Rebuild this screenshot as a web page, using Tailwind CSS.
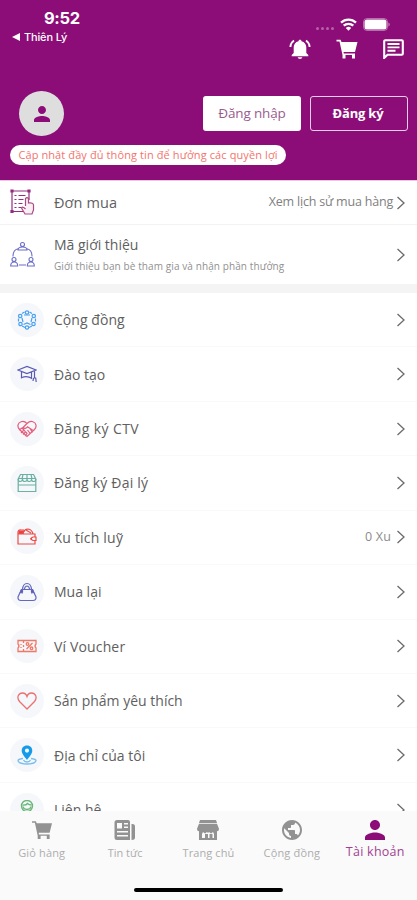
<!DOCTYPE html>
<html lang="vi">
<head>
<meta charset="utf-8">
<title>Tài khoản</title>
<script src="https://cdn.jsdelivr.net/npm/@tailwindcss/browser@4"></script>
</head>
<body class="bg-white">
<svg class="hidden">
  <symbol id="chev" viewBox="0 0 10 14"><path d="M1.500 1 8 7l-6.500 6" fill="none" stroke="#6b6b6b" stroke-width="1.300"/></symbol>
  <symbol id="cart" viewBox="0 0 21 20"><path d="M0 .8h4l1 2.200h16L18.500 13H7l.3 1.600H18.500V16H6L3 2.500H0zM6 16h3v3.500H6zM15.500 16h3v3.500h-3z"/></symbol>
  <symbol id="person" viewBox="4 4 16 16"><path d="M12 12c2.210 0 4-1.790 4-4s-1.790-4-4-4-4 1.790-4 4 1.790 4 4 4zm0 2c-2.670 0-8 1.340-8 4v2h16v-2c0-2.660-5.330-4-8-4z"/></symbol>
</svg>
<div class="w-[417px] h-[900px] flex flex-col overflow-hidden bg-white font-['Open_Sans','Noto_Sans',sans-serif] text-[#606060]">
  <header class="h-[180px] shrink-0 bg-[#8c0d77] text-white">
    <div class="h-[72px] flex justify-between">
      <div class="pl-3 pt-[7px] font-['Inter',sans-serif]">
        <div class="pl-8 text-[16.500px] leading-[22px] font-bold tracking-[-0.35px]">9:52</div>
        <div class="flex items-center gap-[4px] pt-[1px] text-[11px] leading-[14px] font-medium tracking-[-0.15px]"><svg class="w-2 h-2" viewBox="0 0 8 8"><path d="M0 4 8 0v8z" fill="#fff"/></svg><span>Thiên Lý</span></div>
      </div>
      <div class="w-[132px] pr-3 pt-[17px]">
        <div class="flex h-[14px] items-center pl-[31px]">
          <span class="flex gap-[2px] pt-[9px]"><i class="size-[3px] rounded-full bg-white/35"></i><i class="size-[3px] rounded-full bg-white/35"></i><i class="size-[3px] rounded-full bg-white/35"></i><i class="size-[3px] rounded-full bg-white/35"></i></span>
          <svg class="ml-[6px] w-[17px] h-[13px]" viewBox="0 0 17 13" fill="none" stroke="#fff" stroke-width="2.300"><path d="M1 4.700a10.800 10.800 0 0 1 15 0M3.700 7.700a7 7 0 0 1 9.600 0"/><path d="M5.800 10a4 4 0 0 1 5.400 0l-2.700 2.800z" fill="#fff" stroke="none"/></svg>
          <svg class="ml-[6px] w-[27px] h-[13px]" viewBox="0 0 27 13"><rect x=".5" y=".5" width="24" height="12" rx="3.500" fill="none" stroke="#fff" stroke-opacity=".4"/><rect x="1.500" y="1.500" width="22" height="10" rx="2.500" fill="#fff"/><path d="M25.500 4.500c1.500.7 1.500 3.300 0 4z" fill="#fff" fill-opacity=".6"/></svg>
        </div>
        <div class="flex h-[22px] items-center mt-[7px] pl-[4px]">
          <svg class="w-[22px] h-[21px]" viewBox="0 0 22 21" fill="#fff"><path d="M11 .8c1 0 1.500.6 1.500 1.500 3 .8 4.800 3 4.800 6V14l2 2v1.200H2.700V16l2-2V8.300c0-3 1.800-5.200 4.800-6C9.500 1.400 10 .8 11 .8zM8.700 18.300h4.600c-.3 2.200-4.300 2.200-4.600 0z"/><path d="M5 1.500C2.800 3 1.500 5 1.400 8M17 1.500c2.200 1.500 3.500 3.500 3.600 6.500" fill="none" stroke="#fff" stroke-width="1.900"/></svg>
          <svg class="ml-[25px] w-[22px] h-[20px] fill-white"><use href="#cart"/></svg>
          <svg class="ml-[25px] w-[21px] h-[20px]" viewBox="0 0 21 20"><path d="M1.200 19V2.200Q1.200 1.200 2.200 1.200h16.600q1 0 1 1v12.600q0 1-1 1H4.500z" fill="none" stroke="#fff" stroke-width="2.100"/><path d="M4.500 5h12M4.500 8.400h12M4.500 11.800h8" stroke="#fff" stroke-width="1.900"/></svg>
        </div>
      </div>
    </div>
    <div class="h-[72px] flex items-center pl-[19px] pr-[9px] pt-[11px]">
      <div class="size-[45px] rounded-full bg-[#dedede] flex items-center justify-center"><svg class="size-4 fill-[#8c0d77]"><use href="#person"/></svg></div>
      <div class="ml-auto w-[98px] h-[35px] rounded-[3px] bg-white text-[#9a5b8f] text-[13.500px] tracking-[-0.15px] flex items-center justify-center">Đăng nhập</div>
      <div class="ml-[9px] w-[98px] h-[35px] rounded-[3px] border border-[#edcde8] text-[13px] font-bold tracking-[-0.2px] flex items-center justify-center pr-[2px]">Đăng ký</div>
    </div>
    <div class="ml-[10px] mt-[1px] w-[276px] h-[20px] rounded-full bg-white text-[#f4736d] text-[11px] tracking-[0.1px] whitespace-nowrap flex items-center justify-center">Cập nhật đầy đủ thông tin để hưởng các quyền lợi</div>
  </header>
  <main class="flex-1 min-h-0 overflow-hidden">
    <div class="h-[45px] border-t border-t-[#edc6e6] border-b border-b-[#f3f3f3] flex items-center pl-[10px] pr-[11px]">
      <svg class="w-[26px] h-[27px]" viewBox="0 0 26 27" fill="none" stroke="#942c80" stroke-width="1.200"><path d="M13 22.500H2V2h17v9M4.500 6.500h2M8.500 6.500h7M4.500 10.500h2M8.500 10.500h5M4.500 14.500h2M8.500 14.500h4M4.500 18.500h2M8.500 18.500h3"/><path d="M1 1h2v2H1zM18 1h2v2h-2zM1 21.500h2v2H1z" fill="#942c80"/><path d="M15.500 17V9.500q1.500-1.500 3 0V14q5-.5 5 2v5l-1.500 4h-7l-3.500-6q1-2 4 1" fill="#fbeff6" stroke="#a84a83"/></svg>
      <span class="ml-[18px] text-[14.500px] tracking-[0.1px]">Đơn mua</span>
      <span class="ml-auto mr-[3px] text-[12.500px] tracking-[-0.2px] text-[#808080]">Xem lịch sử mua hàng</span>
      <svg class="w-[10px] h-[14px]"><use href="#chev"/></svg>
    </div>
    <div class="h-[59px] flex items-center pl-[10px] pr-[11px]">
      <svg class="w-[25px] h-[27px]" viewBox="0 0 25 27" fill="none" stroke="#6a6dca" stroke-width="1.100"><circle cx="12.500" cy="3.500" r="2"/><path d="M8 9q0-3 4.500-3T17 9zM8 7.800C4.500 8.500 3 10.500 3 15.500M17 7.800c3.500.7 5 2.700 5 7.700M9 24h7"/><circle cx="4" cy="18.500" r="2"/><circle cx="21" cy="18.500" r="2"/><path d="M.7 25q0-4 3.500-4t3.500 4zM17.300 25q0-4 3.500-4t3.500 4z"/></svg>
      <div class="ml-[19px] mt-[2px]"><div class="text-[14px] leading-[22px]">Mã giới thiệu</div><div class="text-[10px] leading-[21px] tracking-[0.1px] text-[#909090] whitespace-nowrap">Giới thiệu bạn bè tham gia và nhận phần thưởng</div></div>
      <svg class="ml-auto w-[10px] h-[14px]"><use href="#chev"/></svg>
    </div>
    <div class="h-[9px] bg-[#f4f4f4]"></div>
    <div class="text-[14px] [&>div]:h-[54.430px] [&>div]:flex [&>div]:items-center [&>div]:pl-[10px] [&>div]:pr-[11px] [&>div]:border-b [&>div]:border-[#f9f9f9] [&>div>i]:size-[34px] [&>div>i]:mr-[10px] [&>div>i]:rounded-full [&>div>i]:bg-[#f5f7fa] [&>div>i]:flex [&>div>i]:items-center [&>div>i]:justify-center [&>div>i>svg]:size-5 [&>div>svg]:w-[10px] [&>div>svg]:h-[14px] [&>div>svg]:ml-auto">
      <div><i><svg viewBox="0 0 20 20" fill="none" stroke="#4ba1ef" stroke-width="1.200"><circle cx="10" cy="2.500" r="1.700"/><circle cx="3.200" cy="6" r="1.700"/><circle cx="16.800" cy="6" r="1.700"/><circle cx="3.500" cy="14" r="1.700"/><circle cx="16.500" cy="14" r="1.700"/><circle cx="10" cy="17.500" r="1.700"/><path d="M7 5h6M5 3.500 7.500 2M15 3.500 12.500 2M1.500 8.500v3M18.500 8.500v3M5 16l3 1.500M15 16l-3 1.500M5 8l1 4M15 8l-1 4M6.500 14.500 10 13l3.500 1.500"/></svg></i><span class="tracking-[0.05px]">Cộng đồng</span><svg><use href="#chev"/></svg></div>
      <div><i><svg viewBox="0 0 20 20" fill="none" stroke="#5a5ab2" stroke-width="1.200"><path d="m1 6 9-3.500L19 6l-9 3.500zM4.500 7.500v6.200q5.500-2.500 10 .6V8M17.500 7v7M16.500 14h2.200l.5 4M16.500 14l-.5 3"/></svg></i><span>Đào tạo</span><svg><use href="#chev"/></svg></div>
      <div><i><svg viewBox="0 0 20 20" fill="none" stroke="#e55c7b" stroke-width="1.200"><path d="M10 4.500Q7 1.500 4 2.800C.5 4 0 8 2.500 10.500l7.500 7 7.500-7C20 8 19.500 4 16 2.800q-3-1.300-6 1.700L6 8.500q2 2 4.500-.7l6 4M13 9.500l2.500 4M10.500 11l3 4M2 11l3-2 2 2-3 3M7 11l1.500 2L6 15.500M9 13l1 1.500L8 17"/></svg></i><span class="tracking-[0.4px]">Đăng ký CTV</span><svg><use href="#chev"/></svg></div>
      <div><i><svg viewBox="0 0 20 20" fill="none" stroke="#6bb0a4" stroke-width="1.200"><path d="M3.500 1.500h13l2.300 4.500v12.500H1.200V6zM1.500 5.500h17M1.200 12h17.600M6 1.500 5 6M10 1.500V6M14 1.500 15 6"/><path d="M1.200 6q0 2.500 2 2.500T5.500 6q0 2.500 2.300 2.500T10 6q0 2.500 2.300 2.500T14.500 6q0 2.500 2.200 2.500T18.800 6"/></svg></i><span class="tracking-[0.2px]">Đăng ký Đại lý</span><svg><use href="#chev"/></svg></div>
      <div><i><svg viewBox="0 0 20 20" fill="none" stroke="#ec4a47" stroke-width="1.200"><path d="M1 4.500V17h17v-3.500M18 10V7H1.500M1 4.500q1-2 3-1.500h3M6 7q1-5 5-5 4 .5 5 5M9 3l5 3M19 10h-3q-4 1.800 0 3.500h3zM13 11.800h2"/><path d="M2 4h5L5.500 6.500H2z" fill="#ec3f3c"/></svg></i><span class="tracking-[0.2px]">Xu tích luỹ</span><span class="ml-auto mr-[5px] text-[12.500px] tracking-[0.15px] text-[#8c8c8c]">0 Xu</span><svg class="!ml-0"><use href="#chev"/></svg></div>
      <div><i><svg viewBox="0 0 20 20" fill="none" stroke="#6367be" stroke-width="1.200"><path d="M4.500 7.500h11L19 15q.3 3.500-3 3.500H4Q.7 18.500 1 15zM5.500 10V7.500Q6 1.500 10 1.500t4.500 6V10M7.300 7.500Q8 4 10 4t2.700 3.500"/><path d="m4.500 7.500-1.200 3 2.700.5M15.500 7.500l1.200 3-2.700.5" fill="#5055b5"/></svg></i><span>Mua lại</span><svg><use href="#chev"/></svg></div>
      <div><i><svg viewBox="0 0 20 20" fill="none" stroke="#f07867" stroke-width="1.300"><path d="M1 4.500h18V8q-2 2 0 4v3.500H1V12q2-2 0-4zM6.500 5v2M6.500 9v2M6.500 13v2M9.500 13l6-6M4 8v1M4 11v1"/><circle cx="10.500" cy="8" r="1.300"/><circle cx="14.500" cy="12.300" r="1.300"/></svg></i><span class="tracking-[0.15px]">Ví Voucher</span><svg><use href="#chev"/></svg></div>
      <div><i><svg viewBox="0 0 20 20" fill="none" stroke="#ea7072" stroke-width="1.300"><path d="M10 18 2.500 10.500C-1 6 2 2 5.500 2 8 2 9.500 4 10 5.500 10.500 4 12 2 14.500 2 18 2 21 6 17.500 10.500z"/></svg></i><span>Sản phẩm yêu thích</span><svg><use href="#chev"/></svg></div>
      <div><i><svg viewBox="0 0 20 20"><path d="M10 .5c-3.500 0-5.300 2.500-5.300 5.200C4.700 9 8.500 12.500 10 15c1.500-2.500 5.300-6 5.300-9.300C15.300 3 13.500.5 10 .5zm0 3a2 2 0 1 1 0 4.200 2 2 0 0 1 0-4.200z" fill="#169bea" fill-rule="evenodd"/><path d="M6 13.500q-5 .5-5 2.300Q2 19 10 19t9-3.200q0-1.800-5-2.300M6.500 15q1 2 3.500 2t3.500-2" fill="none" stroke="#78bdec" stroke-width="1.300"/></svg></i><span>Địa chỉ của tôi</span><svg><use href="#chev"/></svg></div>
      <div><i><svg viewBox="0 0 20 20" fill="none" stroke="#6bb77a" stroke-width="1.400"><circle cx="10" cy="6" r="5.500"/><path d="M5.500 5q3.500.5 5-1.500 1.500 1.500 4 1.500M6 6.500Q6.500 9.500 10 9.500t4-3M3 18q1-5 7-5t7 5"/></svg></i><span>Liên hệ</span><svg><use href="#chev"/></svg></div>
    </div>
  </main>
  <nav class="h-[89px] shrink-0 bg-[#fafafa] flex flex-col items-center text-[#adadad] text-[11px]">
    <div class="w-full grid grid-cols-5 pt-[9px] [&>div]:flex [&>div]:flex-col [&>div]:items-center [&>div]:gap-[4px] [&>div]:leading-[18px] [&>div]:whitespace-nowrap">
      <div><svg class="w-[20px] h-[20px] fill-[#929292]"><use href="#cart"/></svg><span class="tracking-[0.15px]">Giỏ hàng</span></div>
      <div><svg class="w-[22px] h-[20px]" viewBox="0 0 22 20"><path fill="#929292" fill-rule="evenodd" d="M3 0h11q2 0 2 2v18H3q-2.500 0-2.500-2.500V2.500Q.5 0 3 0zm0 3v5.500h5V3zm7 0v1.500h4V3zm0 3.500V8h4V6.500zM3 11v1.500h11V11zm0 4v1.500h11V15z"/><path fill="#929292" d="M17.500 4h1q2.500 0 2.500 2.500v11q0 2.500-3.500 2.500z"/></svg><span>Tin tức</span></div>
      <div><svg class="w-[24px] h-[20px]" viewBox="0 0 24 20"><path fill="#929292" fill-rule="evenodd" d="M4 0h16l1 3H3zM3 3.800h18l2 5q0 2.500-2 2.500V20H3v-8.700q-2 0-2-2.500zM7 12l-1 2v4h3v-4h3v4h1.500v-4h3v4H18v-4l-1-2-2 1.500-2-1.500-1 1-1-1-2 1.500z"/></svg><span class="tracking-[0.1px]">Trang chủ</span></div>
      <div><svg class="size-5" viewBox="2 2 20 20"><path fill="#929292" d="M12 2C6.480 2 2 6.480 2 12s4.480 10 10 10 10-4.480 10-10S17.520 2 12 2zm-1 17.930c-3.950-.49-7-3.850-7-7.930 0-.62.080-1.210.21-1.790L9 15v1c0 1.100.9 2 2 2v1.930zm6.900-2.540c-.26-.81-1-1.390-1.900-1.390h-1v-3c0-.55-.45-1-1-1H8v-2h2c.55 0 1-.45 1-1V7h2c1.100 0 2-.9 2-2v-.41c2.930 1.190 5 4.060 5 7.410 0 2.080-.8 3.970-2.100 5.390z"/></svg><span class="tracking-[0.15px]">Cộng đồng</span></div>
      <div class="text-[#a13f91] text-[12.500px]"><svg class="w-[20px] h-[20px] fill-[#8c0d77]"><use href="#person"/></svg><span class="-mt-[1px] tracking-[0.25px]">Tài khoản</span></div>
    </div>
    <div class="mt-[26px] w-[149px] h-[4px] rounded-full bg-black"></div>
  </nav>
</div>
</body>
</html>
